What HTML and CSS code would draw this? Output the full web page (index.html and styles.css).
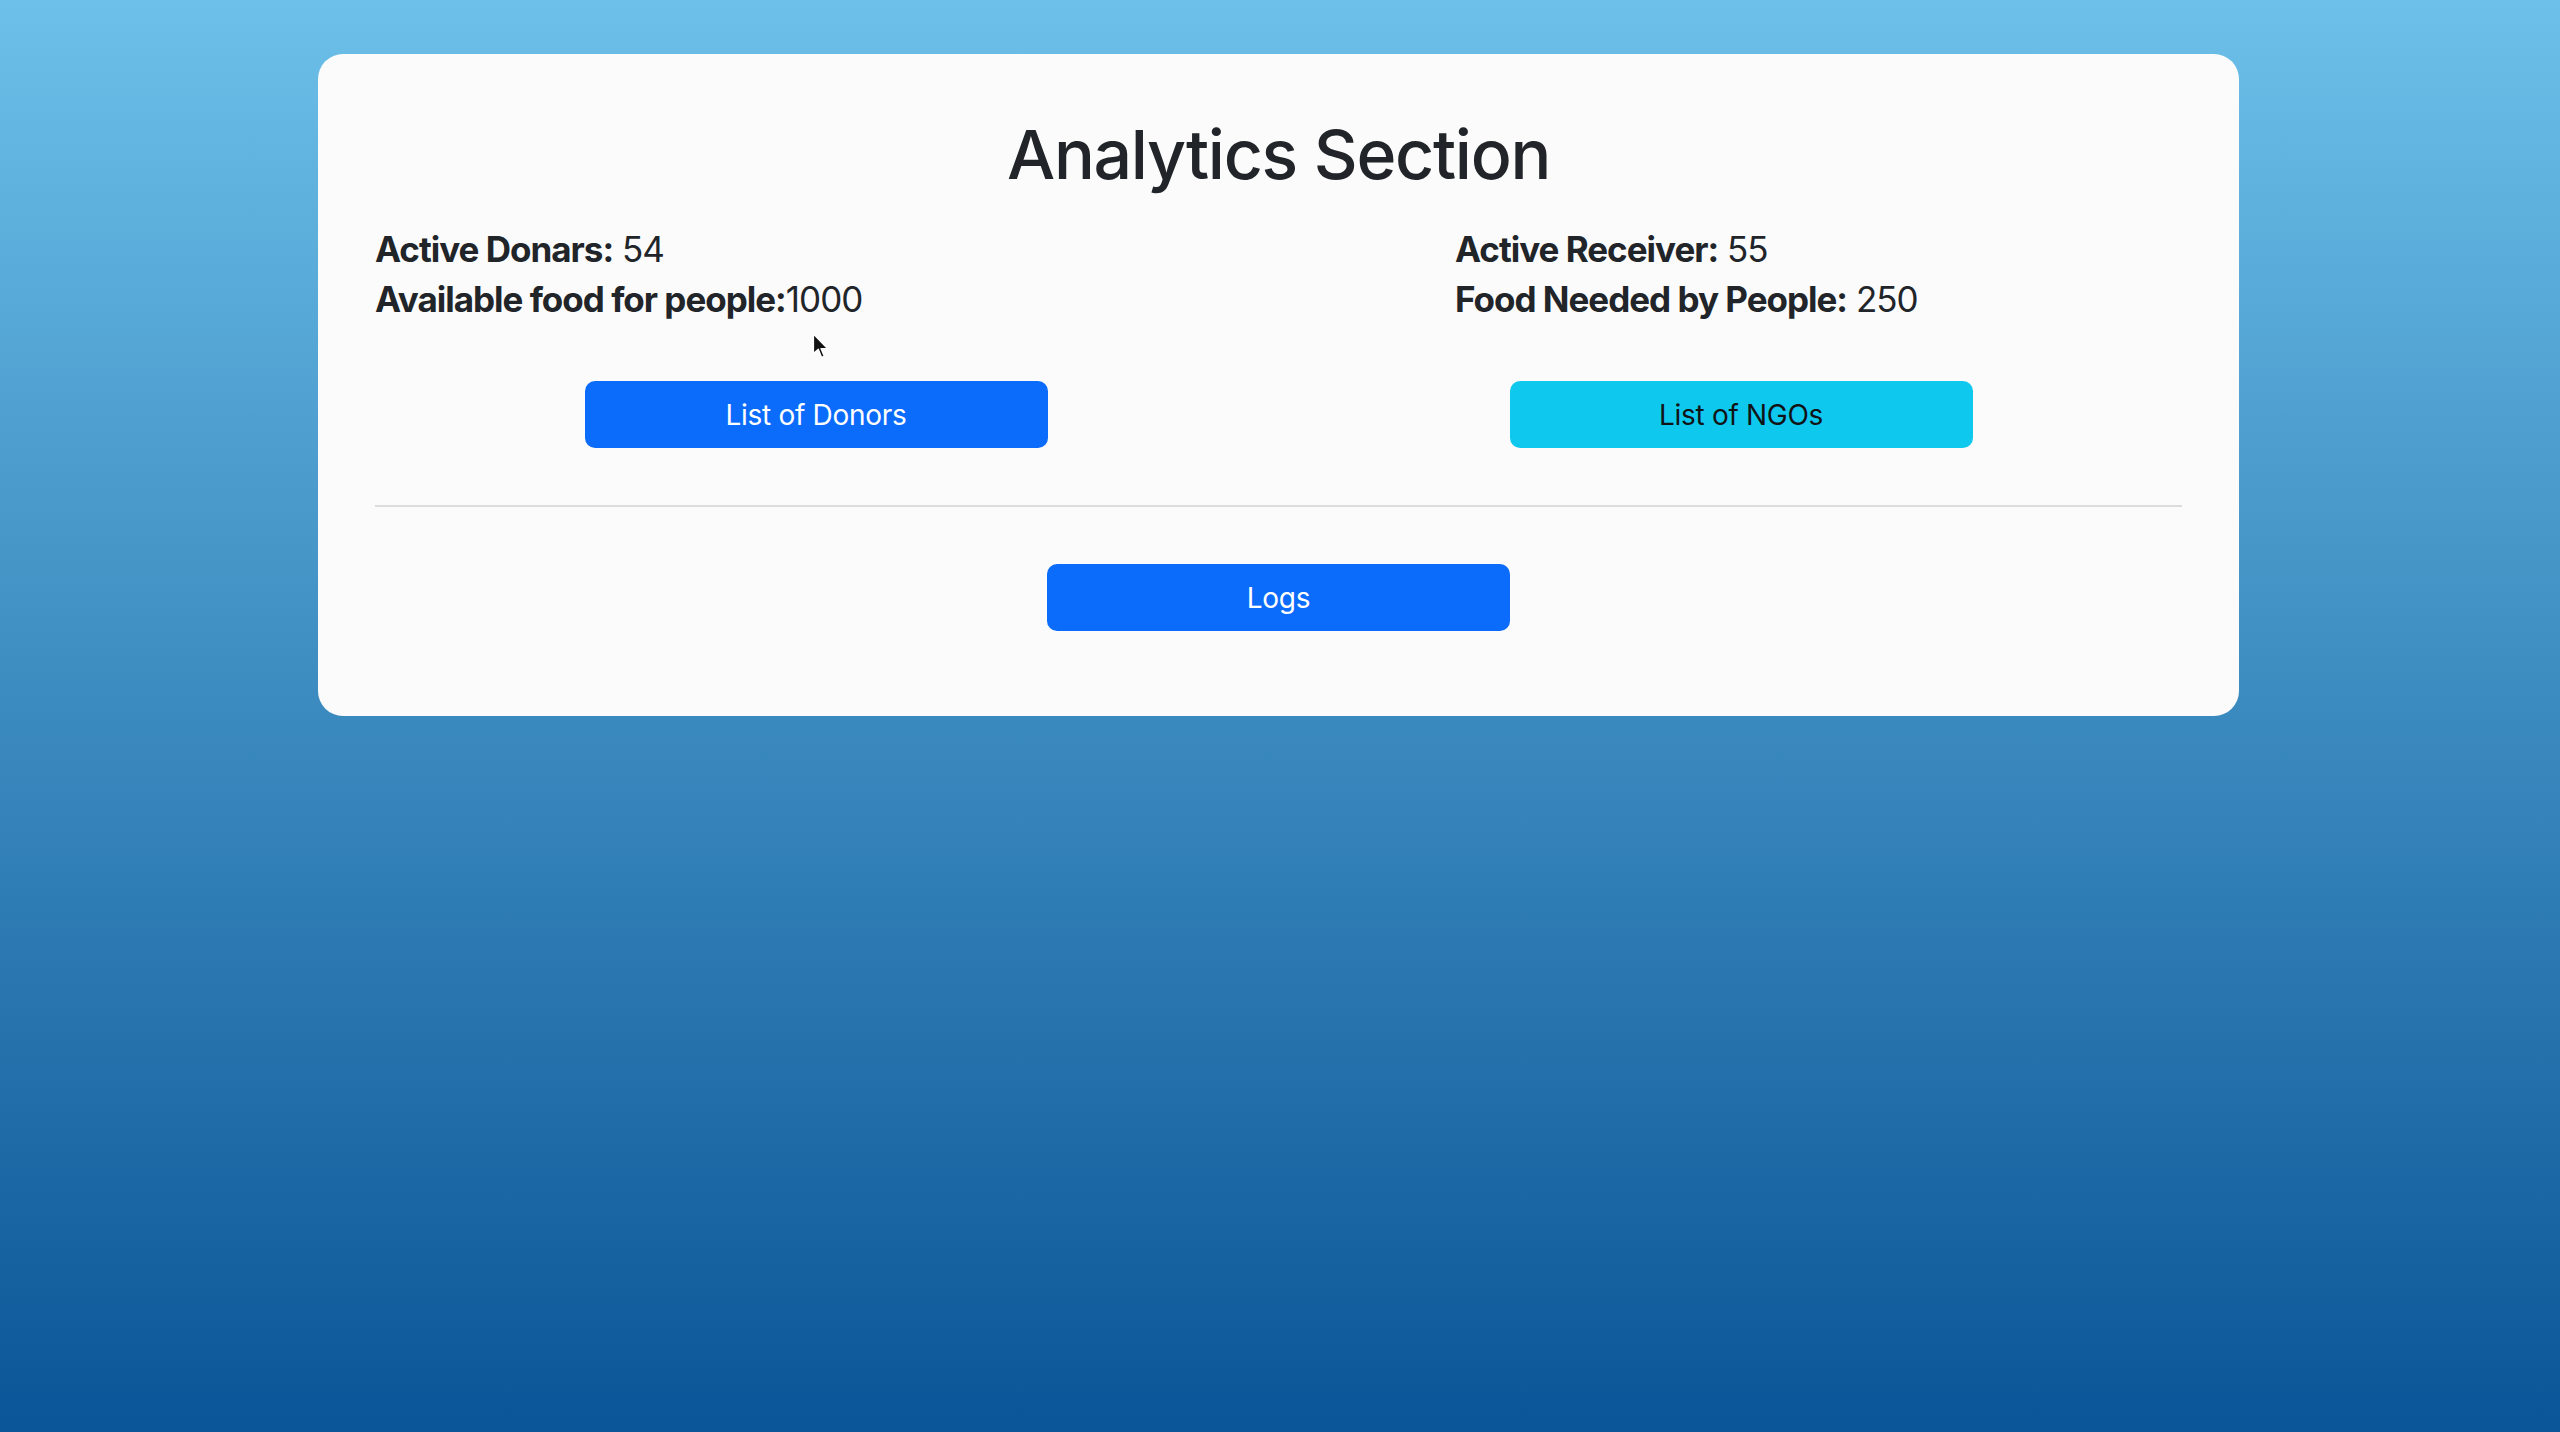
FILE: index.html
```html
<!DOCTYPE html>
<html lang="en">
<head>
<meta charset="utf-8">
<title>Analytics Section</title>
<link rel="stylesheet" href="styles.css">
</head>
<body>
<main class="card">
  <h1 class="title">Analytics Section</h1>
  <div class="stats">
    <div class="stat-col">
      <p class="stat"><strong>Active Donars:</strong> 54</p>
      <p class="stat"><strong>Available food for people:</strong>1000</p>
    </div>
    <div class="stat-col">
      <p class="stat"><strong>Active Receiver:</strong> 55</p>
      <p class="stat"><strong>Food Needed by People:</strong> 250</p>
    </div>
  </div>
  <div class="btn-row">
    <button class="btn btn-primary">List of Donors</button>
    <button class="btn btn-info">List of NGOs</button>
  </div>
  <hr class="divider">
  <div class="logs-row">
    <button class="btn btn-primary">Logs</button>
  </div>
  <svg class="cursor" width="18" height="28" viewBox="0 0 16 26" aria-hidden="true">
    <path d="M1 1 L1 19 L5.5 15 L8.5 22.5 L11 21.5 L8 14.5 L14 14.5 Z" fill="#111" stroke="#fff" stroke-width="1.2" stroke-linejoin="round"/>
  </svg>
</main>
</body>
</html>
```

FILE: styles.css
```css
html, body {
  margin: 0;
  padding: 0;
}

body {
  min-height: 1432px;
  background: linear-gradient(to bottom, #6cc0e9 0%, #3b8abf 50%, #0a5597 100%);
  font-family: Inter, "Noto Sans", "Liberation Sans", sans-serif;
  color: #212529;
  padding-top: 54px;
  box-sizing: border-box;
}

.card {
  position: relative;
  width: 1921px;
  margin: 0 auto 0 318px;
  background: #fbfbfb;
  border-radius: 25px;
  padding: 58px 57px 85px 57px;
  box-sizing: border-box;
}

.title {
  margin: 0 0 28px 0;
  text-align: center;
  font-size: 68px;
  line-height: 84px;
  font-weight: 500;
  letter-spacing: -1.3px;
}

.stats {
  display: grid;
  grid-template-columns: 1080px 1fr;
}

.stat {
  margin: 0;
  font-size: 35px;
  line-height: 50px;
  font-weight: 400;
  letter-spacing: -1px;
}

.stat strong {
  font-weight: 700;
}

.btn-row {
  display: grid;
  grid-template-columns: 1fr 1fr;
  column-gap: 43px;
  justify-items: center;
  margin-top: 57px;
}

.btn {
  width: 463px;
  height: 67px;
  border: none;
  border-radius: 10px;
  font-family: Inter, "Noto Sans", "Liberation Sans", sans-serif;
  font-size: 28px;
  font-weight: 400;
  letter-spacing: -0.3px;
  cursor: pointer;
}

.btn-primary {
  background: #0b6cfb;
  color: #ffffff;
}

.btn-info {
  background: #0fc8ed;
  color: #111417;
}

.divider {
  margin: 57px 0 0 0;
  border: none;
  border-top: 2px solid #dcdcdc;
  height: 0;
}

.logs-row {
  display: flex;
  justify-content: center;
  margin-top: 57px;
}

.cursor {
  position: absolute;
  left: 494px;
  top: 279px;
}
```
